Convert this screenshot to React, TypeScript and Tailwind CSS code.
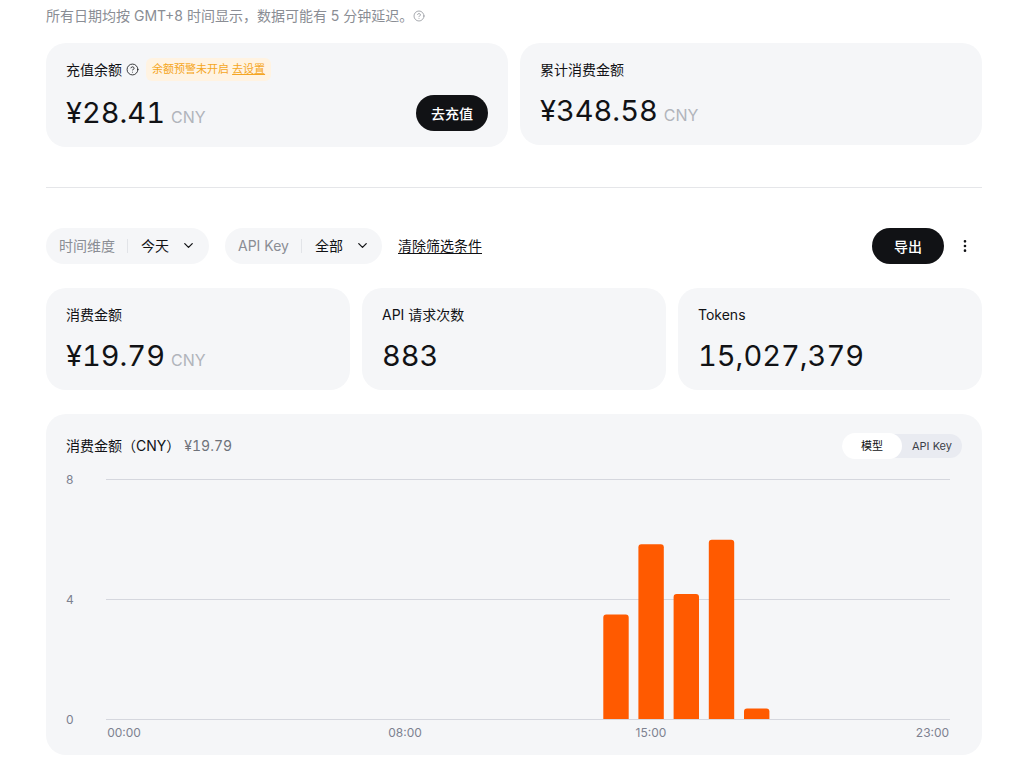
import { ChevronDown, EllipsisVertical, CircleHelp } from "lucide-react";

const font = "font-['Inter','Noto_Sans_CJK_SC',sans-serif]";

const bars = [
  { x: 603.3, top: 614.5 },
  { x: 638.4, top: 544.2 },
  { x: 673.6, top: 594 },
  { x: 708.8, top: 539.7 },
  { x: 744, top: 708.5 },
];

function Amount({ value, unit }: { value: string; unit?: string }) {
  return (
    <div className="flex items-baseline">
      <span className="text-[29px] leading-[38px] text-[#111215] tabular-nums">{value}</span>
      {unit && <span className="ml-[6px] text-[16px] text-[#b1b4bb]">{unit}</span>}
    </div>
  );
}

function StatCard({ label, value, unit }: { label: string; value: string; unit?: string }) {
  return (
    <div className="h-[102px] rounded-[20px] bg-[#f5f6f8] pl-5 pt-[18px]">
      <div className="text-[14px] leading-[18px] text-[#111215]">{label}</div>
      <div className="mt-[13px]">
        <Amount value={value} unit={unit} />
      </div>
    </div>
  );
}

function Filter({ label, value, width }: { label: string; value: string; width: string }) {
  return (
    <div className={`flex h-9 items-center rounded-full bg-[#f5f6f8] pb-[1px] pl-[13px] ${width}`}>
      <span className="text-[14px] text-[#8a8d94]">{label}</span>
      <span className="ml-[12px] mr-[13px] h-[14px] w-px bg-[#e2e4e8]" />
      <span className="text-[14px] text-[#111215]">{value}</span>
      <ChevronDown className="ml-[12px] h-[15px] w-[15px] text-[#111215]" strokeWidth={2} />
    </div>
  );
}

function Chart() {
  const lines = [
    { y: 479.5, label: "8" },
    { y: 599.5, label: "4" },
    { y: 719.5, label: "0" },
  ];
  const ticks = [
    { x: 124, label: "00:00" },
    { x: 405, label: "08:00" },
    { x: 651, label: "15:00" },
    { x: 932.5, label: "23:00" },
  ];
  return (
    <svg viewBox="46 470 936 270" className="mt-[5px] block h-[270px] w-[936px]">
      {lines.map((l) => (
        <g key={l.label}>
          <line x1={106} x2={950} y1={l.y} y2={l.y} stroke="#d5d7de" strokeWidth={1} />
          <text x={66} y={l.y + 4.5} fontSize={12} fill="#7d8190">
            {l.label}
          </text>
        </g>
      ))}
      {bars.map((b) => (
        <path
          key={b.x}
          d={`M${b.x} 719V${b.top + 3}a3 3 0 0 1 3-3h19.4a3 3 0 0 1 3 3V719z`}
          fill="#ff5a00"
        />
      ))}
      {ticks.map((t) => (
        <text key={t.label} x={t.x} y={737} fontSize={12} fill="#7d8190" textAnchor="middle">
          {t.label}
        </text>
      ))}
    </svg>
  );
}

export default function App() {
  return (
    <div className={`h-[773px] w-[1020px] overflow-hidden bg-white pl-[46px] pr-[38px] ${font}`}>
      <div className="flex h-[43px] items-start pt-[7px] text-[14px] leading-[18px] text-[#8a8d94]">
        <span>所有日期均按 GMT+8 时间显示，数据可能有 5 分钟延迟。</span>
        <CircleHelp className="ml-0 mt-[3px] h-3 w-3" strokeWidth={1.5} />
      </div>

      <div className="grid grid-cols-2 items-start gap-3">
        <div className="flex h-[104px] flex-col rounded-[20px] bg-[#f5f6f8] pl-5 pr-5 pt-[15px]">
          <div className="flex items-center">
            <span className="text-[14px] leading-[20px] text-[#111215]">充值余额</span>
            <CircleHelp className="ml-[4px] h-[13px] w-[13px] text-[#111215]" strokeWidth={1.5} />
            <span className="ml-[7px] rounded-[6px] bg-[#fff3e2] px-[6px] py-[3px] text-[11px] leading-[17px] text-[#f5a623]">
              余额预警未开启 <span className="underline">去设置</span>
            </span>
          </div>
          <div className="mt-[13px] flex items-center justify-between">
            <Amount value="¥28.41" unit="CNY" />
            <button className="h-9 w-[72px] rounded-full bg-[#111215] text-[14px] font-medium text-white">去充值</button>
          </div>
        </div>
        <StatCard label="累计消费金额" value="¥348.58" unit="CNY" />
      </div>

      <div className="mt-10 h-px bg-[#e5e6e9]" />

      <div className="mt-10 flex h-9 items-center">
        <Filter label="时间维度" value="今天" width="w-[163px]" />
        <div className="ml-4">
          <Filter label="API Key" value="全部" width="w-[157px]" />
        </div>
        <span className="ml-4 pb-[1px] text-[14px] text-[#111215] underline underline-offset-2">清除筛选条件</span>
        <button className="ml-auto h-9 w-[72px] rounded-full bg-[#111215] text-[14px] font-medium text-white">导出</button>
        <EllipsisVertical className="ml-[13px] mr-[9px] h-[16px] w-[16px] text-[#111215]" strokeWidth={2} />
      </div>

      <div className="mt-6 grid grid-cols-[304px_304px_304px] gap-3">
        <StatCard label="消费金额" value="¥19.79" unit="CNY" />
        <StatCard label="API 请求次数" value="883" />
        <StatCard label="Tokens" value="15,027,379" />
      </div>

      <div className="mt-6 h-[341px] rounded-[20px] bg-[#f5f6f8]">
        <div className="flex h-[51px] items-end justify-between pl-5 pr-5">
          <div className="mb-[3px] flex h-[32px] items-center text-[14px] leading-[18px]">
            <span className="text-[#111215]">消费金额（CNY）</span>
            <span className="ml-[4px] text-[#6f727a] tabular-nums">¥19.79</span>
          </div>
          <div className="relative mb-[7px] flex h-6 w-[120px] items-center justify-end rounded-full bg-[#e9ebf1] pr-[10px] text-[11px] text-[#3c3f48]">
            API Key
            <span className="absolute left-0 top-[-1px] flex h-[26px] w-[60px] items-center justify-center rounded-full bg-white text-[11px] text-[#111215]">
              模型
            </span>
          </div>
        </div>
        <Chart />
      </div>
    </div>
  );
}
